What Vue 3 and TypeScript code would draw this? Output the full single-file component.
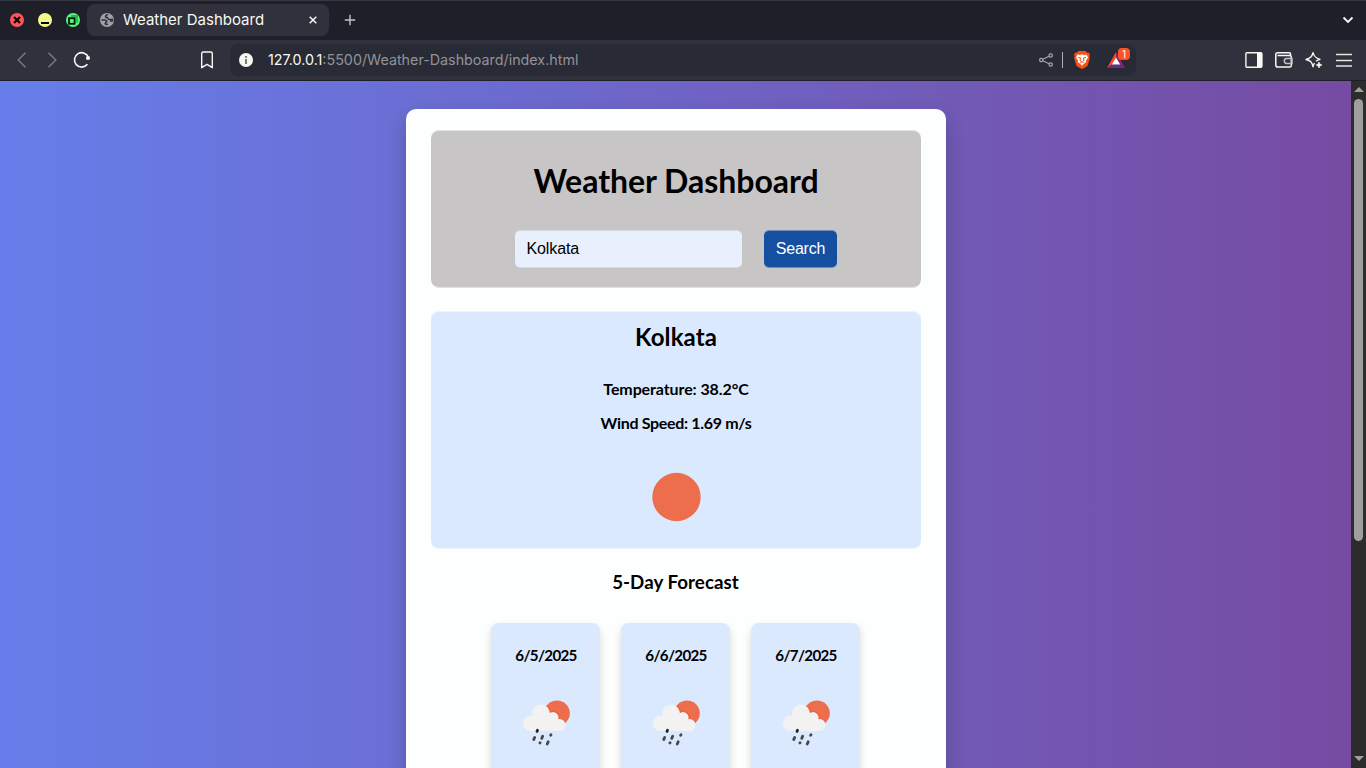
<script setup lang="ts">
import { ref } from 'vue'

interface Day {
  date: string
}

const city = ref('Kolkata')
const days: Day[] = [{ date: '6/5/2025' }, { date: '6/6/2025' }, { date: '6/7/2025' }]
</script>

<template>
  <div class="browser">
    <div class="tabbar">
      <div class="controls">
        <svg width="14" height="14" viewBox="0 0 14 14"><circle cx="7" cy="7" r="7" fill="#ff5555" /><path d="M4 4l6 6M10 4l-6 6" stroke="#15080a" stroke-width="2.3" /></svg>
        <svg width="14" height="14" viewBox="0 0 14 14"><circle cx="7" cy="7" r="7" fill="#f1fa8c" /><path d="M3 10h8" stroke="#000" stroke-width="2" /></svg>
        <svg width="14" height="14" viewBox="0 0 14 14"><circle cx="7" cy="7" r="7" fill="#50fa7b" /><path d="M5 3H11v6.500" fill="none" stroke="#2a9a49" stroke-width="1.400" /><rect x="3" y="5.200" width="5.600" height="5.600" fill="#50fa7b" stroke="#001a08" stroke-width="1.800" /></svg>
      </div>
      <div class="tab">
        <svg width="14" height="14" viewBox="0 0 14 14">
          <circle cx="7" cy="7" r="7" fill="#9fa1a7" />
          <path d="M8 1.600C6.200 2 5.400 2.800 5.600 4c.2.900 1.900.3 2.300 1.200.3 1 1.300 1.400 2.400 1.400h2.200v1.200c-1 .4-1.700.2-2.600-.1" fill="none" stroke="#30313d" stroke-width="1.500" />
          <path d="M1.300 7h3.200c1.600 0 2.600.8 2.200 1.700-.4.900-1.500.6-1.500 1.900 0 .8 1.400 1 2.600.4" fill="none" stroke="#30313d" stroke-width="1.600" />
        </svg>
        <span class="tab-title">Weather Dashboard</span>
        <svg class="tab-close" width="8" height="8" viewBox="0 0 8 8"><path d="M.7.7l6.600 6.600M7.300.7L.7 7.300" stroke="#f8f8f2" stroke-width="1.500" /></svg>
      </div>
      <svg class="new-tab" width="12" height="12" viewBox="0 0 12 12"><path d="M6 .8v10.400M.8 6h10.400" stroke="#c4c4c4" stroke-width="1.400" /></svg>
      <svg class="tab-list" width="12" height="8" viewBox="0 0 12 8"><path d="M1.500 1.500L6 6l4.500-4.500" fill="none" stroke="#f8f8f2" stroke-width="1.800" /></svg>
    </div>

    <div class="toolbar">
      <div class="nav">
        <svg width="10" height="16" viewBox="0 0 10 16"><path d="M8.500.8L1.200 8l7.300 7.200" fill="none" stroke="#7b7c83" stroke-width="1.400" /></svg>
        <svg width="10" height="16" viewBox="0 0 10 16"><path d="M1.500.8L8.800 8l-7.300 7.200" fill="none" stroke="#7b7c83" stroke-width="1.400" /></svg>
        <svg width="18" height="18" viewBox="0 0 18 18"><path d="M15.500 6.500A7.200 7.200 0 1 0 14.400 13.300" fill="none" stroke="#f8f8f2" stroke-width="1.600" /><circle cx="15" cy="7" r="2.100" fill="#f8f8f2" /></svg>
      </div>
      <svg class="bookmark" width="14" height="18" viewBox="0 0 14 18"><path d="M1.700 2.500q0-1.500 1.500-1.500h7.600q1.500 0 1.500 1.500v14.200L7 13.400l-5.300 3.300z" fill="none" stroke="#f8f8f2" stroke-width="1.400" stroke-linejoin="round" /></svg>
      <div class="address">
        <svg width="14" height="14" viewBox="0 0 14 14"><circle cx="7" cy="7" r="7" fill="#f8f8f2" /><path d="M7 3v1.800M7 6v5" stroke="#6c6d72" stroke-width="1.800" /></svg>
        <span class="url"><b>127.0.0.1</b>:5500/Weather-Dashboard/index.html</span>
        <svg class="share" width="14" height="14" viewBox="0 0 14 14"><g fill="none" stroke="#a4a5a7" stroke-width="1.200"><circle cx="2.300" cy="7" r="1.700" /><circle cx="11.700" cy="2.500" r="1.700" /><circle cx="11.700" cy="11.500" r="1.700" /><path d="M3.900 6.300l6.200-3M3.900 7.700l6.200 3" /></g></svg>
        <span class="divider"></span>
        <svg class="shield" width="16" height="18" viewBox="0 0 16 18">
          <path d="M4.500 0h7l1.600 1.700 1.500-.2 1.300 2-.5 1.600.5 1.600-2 7.100q-.4 1.200-1.500 2L8 18l-4.400-2.200q-1.100-.8-1.500-2L.1 6.700l.5-1.600-.5-1.600 1.300-2 1.500.2z" fill="#fb4f16" />
          <path d="M3.500 3.500l2.500.4L8 3.300l2 .6 2.500-.4 1.500 3-2 3 .2 1.700-2.100 1.300L8 14.800l-2.100-2.300-2.100-1.300.2-1.700-2-3z" fill="#fff" />
          <path d="M4 6.500l2.700.5-.8 2.300 1.400 1M12 6.500L9.300 7l.8 2.300-1.400 1M6.300 11.500L8 10.700l1.700.8" fill="none" stroke="#fb4f16" stroke-width="1" />
        </svg>
        <div class="rewards">
          <svg width="18" height="16" viewBox="0 0 18 16"><path d="M9 0v5.500L4.800 12.500 0 16z" fill="#ff4724" /><path d="M9 0l9 16-4.800-3.500L9 5.500z" fill="#9e1f63" /><path d="M0 16l4.800-3.500h8.400L18 16z" fill="#662d91" /><path d="M9 5.500l4.200 7H4.800z" fill="#fff" /></svg>
          <span class="badge">1</span>
        </div>
      </div>
      <div class="actions">
        <svg width="18" height="16" viewBox="0 0 18 16"><rect x=".9" y=".8" width="16" height="14.400" rx="1" fill="none" stroke="#f8f8f2" stroke-width="1.400" /><path d="M12 1h5v14h-5z" fill="#f8f8f2" /></svg>
        <svg width="18" height="16" viewBox="0 0 18 16"><g fill="none" stroke="#f8f8f2" stroke-width="1.500"><path d="M15.500 3.500V2q0-1.200-1.200-1.200H2.700Q.8.800.8 2.700v10.200q0 2.200 2.200 2.200h11.700q1.600 0 1.600-1.600V5.200q0-1.600-1.600-1.600H2.500" /><path d="M17 6.500h-5.300q-2.400 0-2.400 2.400t2.400 2.500H17z" stroke="#c0c1c1" /></g></svg>
        <svg width="18" height="18" viewBox="0 0 18 18"><path d="M8 1.300C9 5.500 10.500 7 15 8.300c-1.700.5-3 1.100-4 2M8 1.300C7 5.800 5.500 7.200 1 8.500 5.500 9.700 7 11.200 8 15.700c.4-1.500.9-2.700 1.500-3.500" fill="none" stroke="#f8f8f2" stroke-width="1.400" stroke-linejoin="round" /><path d="M14 11l.9 2.100 2.100.9-2.100.9L14 17l-.9-2.100L11 14l2.100-.9z" fill="#f8f8f2" stroke="#f8f8f2" stroke-width=".6" /></svg>
        <svg width="18" height="14" viewBox="0 0 18 14"><path d="M1 1.500h16M1 7.500h16M1 13h16" stroke="#e3e4e1" stroke-width="1.300" /></svg>
      </div>
    </div>

    <div class="viewport">
      <div class="page">
        <main class="container">
          <header class="hero">
            <h1>Weather Dashboard</h1>
            <form class="search" @submit.prevent>
              <input v-model="city" type="text" spellcheck="false" />
              <button type="submit">Search</button>
            </form>
          </header>
          <section class="current">
            <h2>{{ city }}</h2>
            <p class="temp">Temperature: 38.2°C</p>
            <p class="wind">Wind Speed: 1.69 m/s</p>
            <svg class="sun" width="50" height="50" viewBox="0 0 50 50"><circle cx="25.500" cy="25" r="24.200" fill="#ec6e4c" /></svg>
          </section>
          <h3>5-Day Forecast</h3>
          <section class="forecast">
            <article v-for="day in days" :key="day.date" class="day">
              <h4>{{ day.date }}</h4>
              <svg width="50" height="50" viewBox="0 0 50 50">
                <circle cx="36" cy="15.200" r="12.800" fill="#ec6e4c" />
                <g class="shade" fill="#ea5a38">
                  <circle cx="20.400" cy="15.700" r="9.800" />
                  <circle cx="32.600" cy="19.500" r="6.200" />
                </g>
                <g fill="#f2f2f2">
                  <circle cx="9.600" cy="25.200" r="7.800" />
                  <circle cx="20" cy="15.500" r="9" />
                  <circle cx="32" cy="19.600" r="5.600" />
                  <circle cx="38.500" cy="27" r="6" />
                  <path d="M9.600 19L20 14l12 4 6.500 5v10H9.600z" />
                </g>
                <g stroke="#48484a" stroke-width="2.800" stroke-linecap="round">
                  <path d="M16.500 32.200l-.5 1.200" stroke="#222" />
                  <path d="M21.700 38.200l-1 2.200M13.700 39.400l-1 2.200M30 36.700l-.4.6M19.100 44.800l-.2.200M27.200 43.800l-1 2.200" />
                </g>
              </svg>
            </article>
          </section>
        </main>
      </div>
      <div class="scrollbar">
        <svg width="10" height="6" viewBox="0 0 10 6"><path d="M0 6l5-5 5 5z" fill="#a0a0a0" /></svg>
        <div class="thumb"></div>
        <svg class="down" width="10" height="6" viewBox="0 0 10 6"><path d="M0 0l5 5 5-5z" fill="#a0a0a0" /></svg>
      </div>
    </div>
  </div>
</template>

<style>
body { margin: 0; overflow: hidden; }
</style>

<style scoped>
* { box-sizing: border-box; }
svg { display: block; flex: none; }
.browser { width: 1366px; height: 768px; display: flex; flex-direction: column; overflow: hidden; font-family: Inter, sans-serif; }
.tabbar { height: 40px; flex: none; display: flex; align-items: center; background: #1f1f29; border-top: 1px solid #363741; padding: 0 12px 1px 10px; }
.controls { display: flex; gap: 14px; }
.tab { width: 242px; height: 32px; margin-left: 7px; display: flex; align-items: center; padding: 0 12px 0 13px; border-radius: 8px; background: #30313d; }
.tab-title { margin-left: 9px; font-size: 15px; line-height: 20px; color: #f8f8f2; white-space: nowrap; }
.tab-close { margin-left: auto; }
.new-tab { margin-left: 15px; }
.tab-list { margin-left: auto; }
.toolbar { height: 41px; flex: none; display: flex; align-items: center; background: #30313d; border-bottom: 1px solid #1f1f29; padding: 0 13px 0 17px; }
.nav { display: flex; align-items: center; gap: 20px; }
.nav svg:last-child { margin-left: -4px; }
.bookmark { margin-left: 109px; }
.address { width: 906px; height: 32px; margin-left: 16px; padding: 0 11px 0 9px; display: flex; align-items: center; border-radius: 8px; background: #282a36; }
.url { margin-left: 15px; font-size: 14.300px; line-height: 20px; color: #929398; white-space: nowrap; }
.url b { font-weight: 400; color: #f8f8f2; }
.share { margin-left: auto; }
.divider { width: 1px; height: 16px; margin: 0 11px 0 9px; background: #b0b1b3; }
.rewards { position: relative; margin-left: 17px; }
.badge { position: absolute; left: 11px; top: -4px; width: 12px; height: 12px; border-radius: 4px; background: #fb542b; color: #fff; font-size: 10px; line-height: 12px; text-align: center; }
.actions { margin-left: auto; display: flex; align-items: center; gap: 12px; }
.viewport { flex: 1; min-height: 0; display: flex; }
.page { width: 1351px; padding-top: 28px; overflow: hidden; display: flex; justify-content: center; background: linear-gradient(to right, #667eea, #764ba2); }
.container { width: 540px; height: 1000px; flex: none; padding: 21px 25px; background: #fdfefe; border-radius: 10px; box-shadow: 0 8px 20px rgba(0, 0, 0, .2); font-family: Lato, sans-serif; text-align: center; color: #000; }
.hero, .current, input, button { border: 0 solid; border-width: 1px 0; background-clip: padding-box; }
.hero { height: 158px; padding-top: 31px; background-color: #c8c5c6; border-color: rgba(200, 197, 198, .5); border-radius: 8px; }
h1 { margin: 0; font-size: 32px; line-height: 38px; font-weight: 700; letter-spacing: -.03px; text-indent: 1px; }
.search { margin-top: 30px; display: flex; justify-content: center; gap: 22px; }
input { width: 227px; height: 38px; padding: 0 12px; border-color: rgba(232, 240, 254, .5); border-radius: 5px; outline: none; background-color: #e8f0fe; color: #000; font: 16px "Liberation Sans", sans-serif; letter-spacing: -.1px; }
button { width: 73px; height: 38px; padding: 0 0 0 1px; border-color: rgba(21, 79, 160, .5); border-radius: 5px; background-color: #154fa0; color: #fff; font: 16px "Liberation Sans", sans-serif; letter-spacing: -.2px; }
.current { height: 238px; margin-top: 23px; padding-top: 10px; border-color: rgba(219, 233, 255, .5); border-radius: 8px; background-color: #dbe9ff; }
h2 { margin: 0 0 28px; font-size: 24px; line-height: 29px; letter-spacing: .1px; text-indent: 1px; }
p { margin: 0 0 15px; font-size: 16px; line-height: 19px; font-weight: 700; text-indent: 1px; }
.temp { letter-spacing: -.1px; }
.wind { letter-spacing: -.33px; }
.sun { margin: 40px auto 0; }
h3 { margin: 22px 0 0; font-size: 18.720px; line-height: 23px; letter-spacing: .06px; }
.forecast { margin-top: 29px; display: flex; justify-content: center; gap: 21px; }
.day { width: 109px; height: 220px; padding-top: 23px; background: #dbe9ff; border-radius: 8px; box-shadow: 0 4px 8px rgba(0, 0, 0, .15); }
h4 { margin: 0; font-size: 15.200px; line-height: 19px; letter-spacing: -.7px; text-indent: 1px; }
.day svg { margin: 33px auto 0; }
.shade { clip-path: circle(12.800px at 36px 15.200px) view-box; }
.scrollbar { width: 15px; background: #2c2c2c; display: flex; flex-direction: column; align-items: center; padding: 5px 0 6px; }
.thumb { width: 9px; height: 442px; margin-top: 7px; border-radius: 5px; background: #9f9f9f; }
.down { margin-top: auto; }
</style>
